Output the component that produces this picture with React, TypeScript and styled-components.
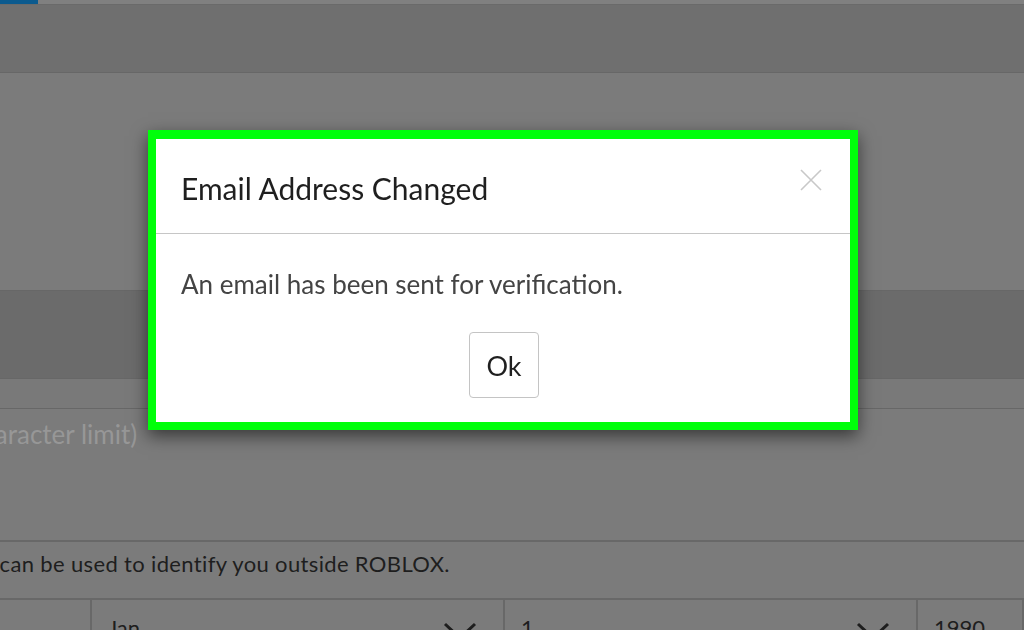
import React from "react";
import styled, { createGlobalStyle } from "styled-components";

const GlobalStyle = createGlobalStyle`
  html, body {
    margin: 0;
    padding: 0;
    background: #7b7b7b;
    font-family: Lato, "Noto Sans", sans-serif;
    overflow: hidden;
  }
`;

const Page = styled.div`
  width: 1024px;
  height: 630px;
  display: flex;
  flex-direction: column;
  overflow: hidden;
`;

const TopBar = styled.div`
  height: 4px;
  flex-shrink: 0;
  background: #808080;
  border-bottom: 1px solid #6a6a6a;
  display: flex;
`;

const ActiveTab = styled.div`
  width: 38px;
  background: #0b5a8e;
`;

const Band = styled.div<{ $h: number; $bg: string }>`
  height: ${(p) => p.$h}px;
  flex-shrink: 0;
  background: ${(p) => p.$bg};
  border-bottom: 1px solid #676767;
  box-sizing: border-box;
`;

const TextRow = styled.div<{ $h: number; $color: string; $size: number; $spacing?: number }>`
  height: ${(p) => p.$h}px;
  flex-shrink: 0;
  box-sizing: border-box;
  border-bottom: 2px solid #686868;
  color: ${(p) => p.$color};
  font-size: ${(p) => p.$size}px;
  letter-spacing: ${(p) => p.$spacing ?? 0}px;
  white-space: nowrap;
  overflow: hidden;
`;

const Shifted = styled.div<{ $shift: number; $top: number }>`
  margin-left: ${(p) => -p.$shift}px;
  padding-top: ${(p) => p.$top}px;
`;

const SelectRow = styled.div`
  flex: 1;
  display: grid;
  grid-template-columns: 92px 413px 413px 1fr;
`;

const SelectCell = styled.div`
  border-right: 2px solid #686868;
  display: flex;
  align-items: flex-start;
  justify-content: space-between;
  padding: 14px 26px 0 16px;
  color: #1e1e1e;
  font-size: 22px;
`;

const Chevron = () => (
  <svg width="34" height="20" viewBox="0 0 34 20" style={{ marginTop: 8 }}>
    <path d="M2 2 L17 16 L32 2" fill="none" stroke="#1e1e1e" strokeWidth="3" />
  </svg>
);

const Modal = styled.div`
  position: fixed;
  left: 148px;
  top: 130px;
  width: 710px;
  height: 300px;
  box-sizing: border-box;
  border: 8px solid #00ff0a;
  border-top-width: 9px;
  background: #fff;
  box-shadow: 0 6px 16px rgba(0, 0, 0, 0.55);
  display: flex;
  flex-direction: column;
`;

const Header = styled.div`
  height: 95px;
  box-sizing: border-box;
  border-bottom: 1px solid #c6c6c6;
  display: flex;
  align-items: center;
  justify-content: space-between;
  padding: 0 28px 0 25px;
`;

const Title = styled.h4`
  margin: 0;
  font-size: 30px;
  line-height: 36px;
  font-weight: 400;
  color: #1f1f1f;
  padding-top: 3px;
`;

const Close = styled.button`
  border: 0;
  background: none;
  padding: 0;
  margin-top: -12px;
  cursor: pointer;
  display: flex;
`;

const Body = styled.div`
  flex: 1;
  display: flex;
  flex-direction: column;
  padding: 35px 25px 0;
`;

const Message = styled.p`
  margin: 0;
  font-size: 26px;
  line-height: 30px;
  color: #444;
`;

const Actions = styled.div`
  display: flex;
  justify-content: center;
  margin-top: 33px;
`;

const OkButton = styled.button`
  width: 70px;
  height: 66px;
  margin-left: 2px;
  border: 1px solid #c4c4c4;
  border-radius: 4px;
  background: #fff;
  font-family: inherit;
  font-size: 27px;
  color: #1f1f1f;
  cursor: pointer;
`;

export default function App() {
  return (
    <>
      <GlobalStyle />
      <Page>
        <TopBar>
          <ActiveTab />
        </TopBar>
        <Band $h={68} $bg="#6f6f6f" />
        <Band $h={218} $bg="#7b7b7b" />
        <Band $h={88} $bg="#6b6b6b" />
        <Band $h={30} $bg="#797979" />
        <TextRow $h={133} $color="#979797" $size={26}>
          <Shifted $shift={106} $top={9}>(1000 character limit)</Shifted>
        </TextRow>
        <TextRow $h={58} $color="#1e1e1e" $size={22} $spacing={0.35}>
          <Shifted $shift={309} $top={8}>
            This information is private and can be used to identify you outside ROBLOX.
          </Shifted>
        </TextRow>
        <SelectRow>
          <SelectCell />
          <SelectCell>
            <span>Jan</span>
            <Chevron />
          </SelectCell>
          <SelectCell>
            <span>1</span>
            <Chevron />
          </SelectCell>
          <SelectCell>
            <span>1990</span>
          </SelectCell>
        </SelectRow>
      </Page>
      <Modal>
        <Header>
          <Title>Email Address Changed</Title>
          <Close aria-label="Close">
            <svg width="22" height="22" viewBox="0 0 22 22">
              <path d="M1 1 L21 21 M21 1 L1 21" stroke="#c8c8c8" strokeWidth="1.6" />
            </svg>
          </Close>
        </Header>
        <Body>
          <Message>An email has been sent for verification.</Message>
          <Actions>
            <OkButton>Ok</OkButton>
          </Actions>
        </Body>
      </Modal>
    </>
  );
}
